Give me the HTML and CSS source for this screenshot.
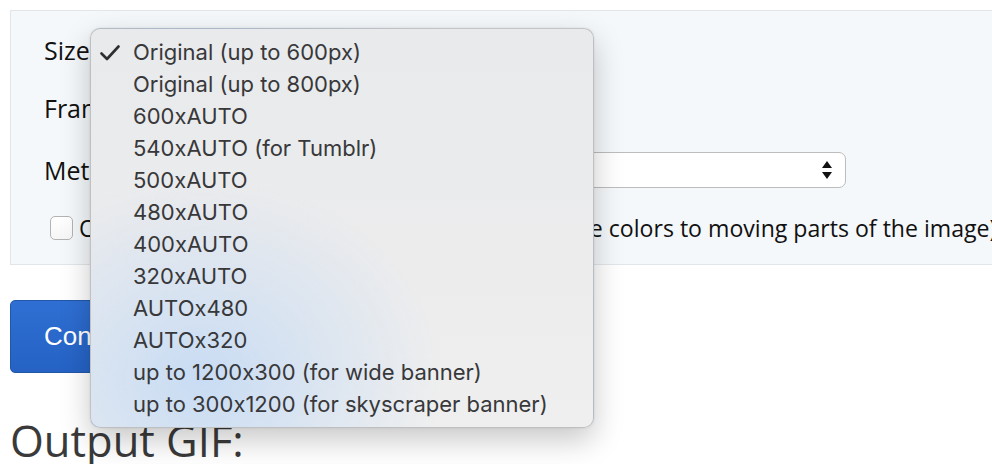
FILE: index.html
```html
<!DOCTYPE html>
<html>
<head>
<meta charset="utf-8">
<link rel="stylesheet" href="styles.css">
</head>
<body>
<div class="page">
  <form class="panel">
    <div class="row row-size">
      <label class="label">Size:</label>
      <div class="select select-size"></div>
    </div>
    <div class="row row-fps">
      <label class="label">Frame rate (FPS):</label>
      <div class="select select-fps"></div>
    </div>
    <div class="row row-method">
      <label class="label">Method:</label>
      <div class="select select-method">
        <span class="sel-text">FFMPEG</span>
        <svg class="updown" width="10" height="18" viewBox="0 0 10 18"><path d="M5 0 L10 7 L0 7 Z M0 11 L10 11 L5 18 Z" fill="#111"/></svg>
      </div>
    </div>
    <div class="row row-check">
      <span class="checkbox"></span>
      <span class="check-label"><span class="check-lead">Optimize for static background (assign mo</span>re colors to moving parts of the image)</span>
    </div>
  </form>
  <div class="actions">
    <button class="btn" type="button">Convert to GIF!</button>
  </div>
  <h2 class="output-title">Output GIF:</h2>

  <div class="menu">
    <div class="item selected">
      <svg class="tick" width="20" height="16" viewBox="0 0 20 16"><path d="M1.5 8.5 L7 14 L18.5 1.5" fill="none" stroke="#2f2f31" stroke-width="2.6" stroke-linecap="round" stroke-linejoin="round"/></svg>
      <span>Original (up to 600px)</span>
    </div>
    <div class="item"><span>Original (up to 800px)</span></div>
    <div class="item"><span>600xAUTO</span></div>
    <div class="item"><span>540xAUTO (for Tumblr)</span></div>
    <div class="item"><span>500xAUTO</span></div>
    <div class="item"><span>480xAUTO</span></div>
    <div class="item"><span>400xAUTO</span></div>
    <div class="item"><span>320xAUTO</span></div>
    <div class="item"><span>AUTOx480</span></div>
    <div class="item"><span>AUTOx320</span></div>
    <div class="item"><span>up to 1200x300 (for wide banner)</span></div>
    <div class="item"><span>up to 300x1200 (for skyscraper banner)</span></div>
  </div>
</div>
</body>
</html>
```
FILE: styles.css
```css
html, body {
  margin: 0;
  padding: 0;
  background: #ffffff;
  overflow: hidden;
}
body {
  width: 992px;
  height: 464px;
  font-family: "Liberation Sans", Arial, sans-serif;
  color: #111;
}
.page {
  position: relative;
  padding: 10px 0 0 10px;
}
.panel {
  width: 1100px;
  box-sizing: border-box;
  background: #f5f8fa;
  border: 1px solid #e2e6e9;
  padding: 21px 0 18px 33px;
  margin: 0;
}
.row {
  display: flex;
  align-items: center;
  height: 36px;
}
.row-fps { margin-top: 22px; }
.row-method { margin-top: 26px; }
.row-check { margin-top: 22px; padding-left: 6px; }
.label {
  font-family: "Open Sans", sans-serif;
  font-size: 25px;
  color: #111;
  margin-right: 12px;
}
.select {
  height: 36px;
  box-sizing: border-box;
  border: 1px solid #bdbdbd;
  border-radius: 7px;
  background: #fff;
  display: flex;
  align-items: center;
  justify-content: space-between;
  padding: 0 13px 0 10px;
}
.select-size { width: 300px; }
.select-fps { width: 200px; }
.select-method { width: 692px; }
.sel-text { font-size: 18px; color: #111; }
.checkbox {
  width: 23px;
  height: 24px;
  box-sizing: border-box;
  border: 1px solid #b3b3b3;
  border-radius: 5px;
  background: linear-gradient(#ffffff, #f6f6f6);
  margin-right: 6px;
  flex: none;
}
.check-label {
  font-family: "Open Sans", sans-serif;
  font-size: 23.1px;
  color: #111;
  white-space: nowrap;
}
.check-lead {
  letter-spacing: 1.17px;
}
.actions {
  margin-top: 35px;
}
.btn {
  height: 73px;
  width: 260px;
  border: 1px solid #2257a8;
  border-radius: 5px;
  background: linear-gradient(#2f6fd3, #2562c4);
  color: #fff;
  font-family: "Liberation Sans", Arial, sans-serif;
  font-size: 26px;
  text-align: left;
  padding: 0 0 0 33px;
  margin: 0;
}
.output-title {
  font-family: "Open Sans", sans-serif;
  font-weight: 400;
  font-size: 43.5px;
  color: #3a3a3a;
  margin: 46px 0 0 0;
  line-height: 1;
}
.menu {
  position: absolute;
  left: 90px;
  top: 28px;
  width: 504px;
  height: 400px;
  box-sizing: border-box;
  border: 1px solid rgba(0,0,0,0.18);
  border-radius: 10px;
  padding: 7px 0 8px 0;
  background:
    radial-gradient(ellipse 240px 200px at 110px 350px, rgba(196,218,244,0.9), rgba(210,226,244,0) 100%),
    linear-gradient(180deg, #e8eaec 0%, #ececed 60%, #efefef 100%);
  box-shadow: 0 12px 30px rgba(0,0,0,0.22), 0 0 3px rgba(0,0,0,0.08);
  font-family: Inter, "Liberation Sans", sans-serif;
  font-feature-settings: "calt" 0;
  font-size: 22px;
  color: #38383a;
}
.item {
  position: relative;
  height: 32px;
  display: flex;
  align-items: center;
  padding-left: 42px;
  white-space: nowrap;
}
.tick {
  position: absolute;
  left: 9px;
  top: 9px;
}
```
